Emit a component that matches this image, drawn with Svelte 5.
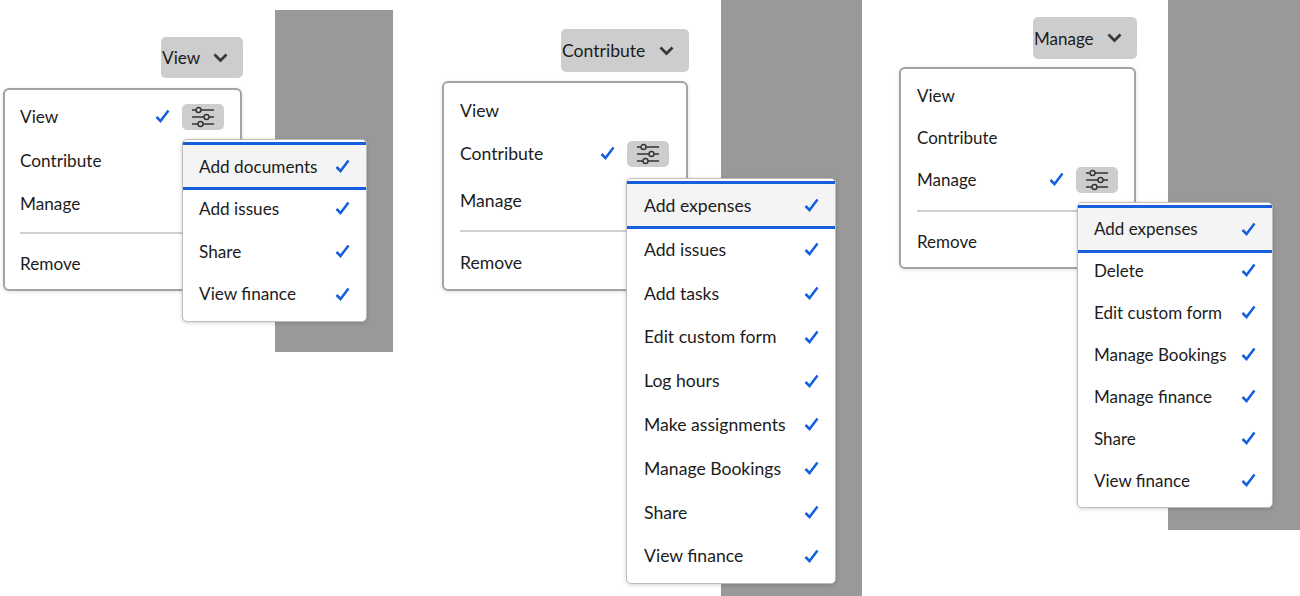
<script>
  const panels = [
    {
      id: "view",
      label: "View",
      perms: ["Add documents", "Add issues", "Share", "View finance"]
    },
    {
      id: "contribute",
      label: "Contribute",
      perms: ["Add expenses", "Add issues", "Add tasks", "Edit custom form", "Log hours", "Make assignments", "Manage Bookings", "Share", "View finance"]
    },
    {
      id: "manage",
      label: "Manage",
      perms: ["Add expenses", "Delete", "Edit custom form", "Manage Bookings", "Manage finance", "Share", "View finance"]
    }
  ];
  const roles = ["View", "Contribute", "Manage"];
</script>

{#snippet check()}
  <svg class="check" width="15" height="14" viewBox="0 0 15 14">
    <path d="M1.5 8 L5.5 12 L13.5 1.5" fill="none" stroke="#1460dc" stroke-width="2.5" />
  </svg>
{/snippet}

<div class="page">
  {#each panels as panel}
    <section class="panel {panel.id}">
      <div class="backdrop"></div>

      <div class="stack">
        <button class="trigger">
          <span>{panel.label}</span>
          <svg width="15" height="10" viewBox="0 0 15 10">
            <path d="M1.5 1.5 L7.5 7.5 L13.5 1.5" fill="none" stroke="#383838" stroke-width="2.7" />
          </svg>
        </button>

        <div class="menu">
          {#each roles as role}
            <div class="row">
              <span>{role}</span>
              {#if role == panel.label}
                <div class="tools">
                  {@render check()}
                  <button class="tune" aria-label="Customize">
                    <svg width="24" height="22" viewBox="0 0 24 22">
                      <g fill="none" stroke="#333" stroke-width="1.4">
                        <path d="M1 4 H5 M10 4 H23 M1 11 H13 M18 11 H23 M1 18 H7 M12 18 H23" />
                        <circle cx="7.5" cy="4" r="2.5" />
                        <circle cx="15.5" cy="11" r="2.5" />
                        <circle cx="9.5" cy="18" r="2.5" />
                      </g>
                    </svg>
                  </button>
                </div>
              {/if}
            </div>
          {/each}
          <hr />
          <div class="row remove"><span>Remove</span></div>
        </div>
      </div>

      <ul class="submenu">
        {#each panel.perms as perm, i}
          <li class:selected={i == 0}>
            <span>{perm}</span>
            {@render check()}
          </li>
        {/each}
      </ul>
    </section>
  {/each}
</div>

<style>
  :global(body) {
    background: #fff;
  }
  .page {
    display: flex;
    width: 1300px;
    height: 596px;
    overflow: hidden;
    font-family: Lato, "Noto Sans", sans-serif;
    color: #1c1c1c;
  }
  .panel {
    position: relative;
    box-sizing: border-box;
    height: 596px;
    flex: none;
  }
  .panel.view {
    width: 420px;
    padding-left: 3px;
    padding-top: 37px;
    font-size: 17.2px;
    --menu-w: 239px;
    --trigger-w: 82px;
    --trigger-h: 41px;
    --gap: 10px;
    --menu-h: 203px;
    --menu-pad: 4px;
    --sub-row: 42.8px;
    --sub-overlap: -3px;
    --selected-pad: 0;
    --pad-left: 15px;
    --pad-right: 16px;
    --sub-left: 16px;
  }
  .panel.contribute {
    width: 460px;
    padding-left: 22px;
    padding-top: 29px;
    font-size: 17.6px;
    --menu-w: 246px;
    --trigger-w: 128px;
    --trigger-h: 43px;
    --gap: 9px;
    --menu-h: 210px;
    --menu-pad: 6px;
    --sub-row: 43.8px;
    --sub-overlap: -1.6px;
    --selected-pad: 0;
    --pad-left: 16px;
    --pad-right: 17px;
    --sub-left: 17px;
  }
  .panel.manage {
    width: 420px;
    padding-left: 19px;
    padding-top: 17px;
    font-size: 17px;
    --menu-w: 237px;
    --trigger-w: 104px;
    --trigger-h: 42px;
    --gap: 8px;
    --menu-h: 202px;
    --menu-pad: 5px;
    --sub-row: 42px;
    --sub-overlap: -4px;
    --selected-pad: 1px;
    --pad-left: 16px;
    --pad-right: 16px;
    --sub-left: 16px;
  }

  .backdrop {
    position: absolute;
    background: #999;
  }
  .view .backdrop { left: 275px; top: 10px; width: 118px; height: 342px; }
  .contribute .backdrop { left: 301px; top: 0; width: 141px; height: 596px; }
  .manage .backdrop { left: 288px; top: 0; width: 132px; height: 530px; }

  .stack {
    position: relative;
    display: flex;
    flex-direction: column;
    align-items: flex-end;
    gap: var(--gap);
    width: var(--menu-w);
  }
  .trigger {
    display: flex;
    align-items: center;
    justify-content: space-between;
    box-sizing: border-box;
    width: var(--trigger-w);
    height: var(--trigger-h);
    margin-right: -1px;
    padding: 0 15px 0 1px;
    border: 0;
    border-radius: 5px;
    background: #cdcdcd;
    font: inherit;
    color: inherit;
  }

  .menu {
    box-sizing: border-box;
    width: 100%;
    height: var(--menu-h);
    padding-top: var(--menu-pad);
    border: 2px solid #a3a3a3;
    border-radius: 6px;
    background: #fff;
    box-shadow: 0 1px 4px rgba(0, 0, 0, 0.12);
  }
  .row {
    display: flex;
    align-items: center;
    justify-content: space-between;
    height: 42px;
    padding: 0 var(--pad-right) 0 var(--pad-left);
  }
  .tools {
    display: flex;
    align-items: center;
    gap: 12px;
  }
  .tune {
    display: flex;
    align-items: center;
    justify-content: center;
    width: 42px;
    height: 26px;
    margin-top: 2px;
    padding: 0;
    border: 0;
    border-radius: 5px;
    background: #cdcdcd;
  }
  .view .row:nth-child(1) { height: 44px; margin-bottom: 1px; }
  .view .row:nth-child(2) { margin-bottom: 1px; }
  .contribute .row:nth-child(2) { height: 44px; margin-bottom: 4px; }
  hr {
    height: 2px;
    margin: 8px 16px 8px var(--pad-left);
    border: 0;
    background: #cfcfcf;
  }
  .contribute hr {
    margin-top: 9px;
    margin-bottom: 9px;
  }
  .manage hr {
    margin-top: 10px;
  }

  .submenu {
    position: absolute;
    box-sizing: border-box;
    margin: 0;
    padding: 2px 0 0;
    list-style: none;
    border: 1px solid #bdbdbd;
    border-radius: 5px;
    background: #fff;
    box-shadow: 0 1px 4px rgba(0, 0, 0, 0.18);
  }
  .view .submenu { left: 182px; top: 139px; width: 185px; height: 183px; }
  .contribute .submenu { left: 206px; top: 178px; width: 210px; height: 406px; }
  .manage .submenu { left: 197px; top: 202px; width: 196px; height: 306px; }
  .submenu li {
    display: flex;
    align-items: center;
    justify-content: space-between;
    box-sizing: border-box;
    height: var(--sub-row);
    padding: 0 16px 0 var(--sub-left);
  }
  .submenu li.selected {
    height: 48px;
    margin-bottom: var(--sub-overlap);
    padding-bottom: var(--selected-pad);
    border-top: 3px solid #1460dc;
    border-bottom: 3px solid #1460dc;
    background: #f4f4f4;
  }
  .check {
    flex: none;
  }
</style>
